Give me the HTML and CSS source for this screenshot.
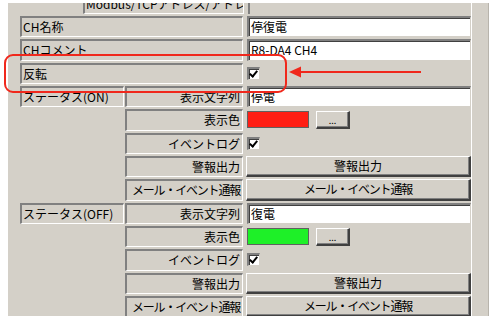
FILE: index.html
```html
<!DOCTYPE html>
<html lang="ja">
<head>
    <meta charset="UTF-8">
    <title>CH設定</title>
    <link rel="stylesheet" href="styles.css">
</head>
<body>
    <div class="panel">
        <div class="sheet">
            <div class="row">
                <div class="blank lead"></div>
                <div class="cell label top">Modbus/TCPアドレス/アドレス</div>
                <div class="cell value"></div>
            </div>
            <div class="row">
                <div class="cell label wide">CH名称</div>
                <div class="field">停復電</div>
            </div>
            <div class="row">
                <div class="cell label wide">CHコメント</div>
                <div class="field">R8-DA4 CH4</div>
            </div>
            <div class="row">
                <div class="cell label wide">反転</div>
                <div class="value"><span class="check"></span></div>
            </div>

            <div class="row">
                <div class="cell label group">ステータス(ON)</div>
                <div class="cell label sub">表示文字列</div>
                <div class="field">停電</div>
            </div>
            <div class="row">
                <div class="blank"></div>
                <div class="cell label sub">表示色</div>
                <div class="value">
                    <span class="swatch red"></span>
                    <button class="dots">...</button>
                </div>
            </div>
            <div class="row">
                <div class="blank"></div>
                <div class="cell label sub">イベントログ</div>
                <div class="value"><span class="check"></span></div>
            </div>
            <div class="row">
                <div class="blank"></div>
                <div class="cell label sub">警報出力</div>
                <button class="action">警報出力</button>
            </div>
            <div class="row">
                <div class="blank"></div>
                <div class="cell label sub tight">メール・イベント通報</div>
                <button class="action tight">メール・イベント通報</button>
            </div>

            <div class="row">
                <div class="cell label group">ステータス(OFF)</div>
                <div class="cell label sub">表示文字列</div>
                <div class="field">復電</div>
            </div>
            <div class="row">
                <div class="blank"></div>
                <div class="cell label sub">表示色</div>
                <div class="value">
                    <span class="swatch green"></span>
                    <button class="dots">...</button>
                </div>
            </div>
            <div class="row">
                <div class="blank"></div>
                <div class="cell label sub">イベントログ</div>
                <div class="value"><span class="check"></span></div>
            </div>
            <div class="row">
                <div class="blank"></div>
                <div class="cell label sub">警報出力</div>
                <button class="action">警報出力</button>
            </div>
            <div class="row">
                <div class="blank"></div>
                <div class="cell label sub tight">メール・イベント通報</div>
                <button class="action tight">メール・イベント通報</button>
            </div>
        </div>
    </div>

    <!-- annotation over the form -->
    <svg class="mark" width="491" height="316" viewBox="0 0 491 316">
        <rect x="5" y="55" width="281" height="37" rx="8" ry="8" fill="none" stroke="#f0281c" stroke-width="2"/>
        <line x1="421" y1="72" x2="298" y2="72" stroke="#f0281c" stroke-width="2"/>
        <polygon points="289,72 301,66.5 301,77.5" fill="#f0281c"/>
    </svg>
</body>
</html>
```

FILE: styles.css
```css
body {
    margin: 0;
    padding: 0;
    background-color: #fff;
    font-family: "Noto Sans CJK JP", "DejaVu Sans", sans-serif;
    font-size: 12px;
    color: #000;
}
.panel {
    margin: 3px 0 0 8px;
    width: 480px;
    height: 313px;
    background-color: #d4d0c8; /* window gray */
    border-right: 1px solid #b8b4ac;
    overflow: hidden;
}
.sheet {
    margin-top: -10.33px; /* scrolled */
    margin-left: 12px;
    width: 451px;
    border-right: 1px solid #fff;
    padding-bottom: 20px;
}
.row {
    display: flex;
    height: 21.33px;
    margin-bottom: 2px;
}
.cell {
    box-sizing: border-box;
    height: 100%;
    display: flex;
    align-items: center;
    white-space: nowrap;
    overflow: hidden;
    line-height: 1;
}
.label {
    border-style: solid;
    border-width: 2px 1px 1px 2px;
    border-color: #808080 #fff #fff #808080;
    padding: 0 2px 0 1px;
}
.wide {
    width: 223px;
}
.group {
    width: 104px;
    margin-right: 1px;
}
.blank {
    width: 104px;
    margin-right: 1px;
    flex: none;
}
.blank.lead {
    width: 62px;
    margin-right: 1px;
}
.top {
    width: 161px;
}
.sub {
    width: 118px;
    justify-content: flex-end;
}
.tight {
    letter-spacing: -1.2px;
}
.field {
    box-sizing: border-box;
    width: 224px;
    height: 100%;
    margin-left: 4px;
    background-color: #fff;
    border-style: solid;
    border-width: 2px 1px 1px 2px;
    border-color: #808080 #d4d0c8 #d4d0c8 #808080;
    box-shadow: inset 1px 1px 0 #404040;
    padding-left: 2px;
    display: flex;
    align-items: center;
    line-height: 1;
    white-space: nowrap;
}
.value {
    box-sizing: border-box;
    width: 224px;
    height: 100%;
    margin-left: 3px;
    display: flex;
    align-items: center;
    padding-left: 1px;
}
.value.cell {
    margin-left: 4px;
    border-left: 2px solid #808080;
}
.check {
    box-sizing: border-box;
    position: relative;
    width: 13px;
    height: 13px;
    background-color: #fff;
    border-style: solid;
    border-width: 2px 1px 1px 2px;
    border-color: #808080 #d4d0c8 #d4d0c8 #808080;
    box-shadow: inset 1px 1px 0 #404040;
}
.check::after {
    content: "";
    position: absolute;
    left: 2px;
    top: 0px;
    width: 3px;
    height: 6px;
    border: solid #000;
    border-width: 0 2px 2px 0;
    transform: rotate(40deg);
}
.swatch {
    box-sizing: border-box;
    width: 62px;
    height: 17px;
    border: 1px solid #606060;
}
.red {
    background-color: #ff1e14;
}
.green {
    background-color: #1ef028;
}
button {
    font-family: "Noto Sans CJK JP", "DejaVu Sans", sans-serif;
    font-size: 12px;
    color: #000;
    background-color: #d4d0c8;
    border-style: solid;
    border-width: 1px 2px 2px 1px;
    border-color: #fff #404040 #404040 #fff;
    box-shadow: inset -1px -1px 0 #808080;
    padding: 0;
    margin: 0;
    line-height: 1;
}
.dots {
    width: 34px;
    height: 18px;
    margin-left: 7px;
    font-size: 9px;
    padding-top: 3px;
}
.action {
    box-sizing: border-box;
    width: 225px;
    height: 100%;
    margin-left: 3px;
}
.mark {
    position: absolute;
    left: 0;
    top: 0;
    pointer-events: none;
}
```
